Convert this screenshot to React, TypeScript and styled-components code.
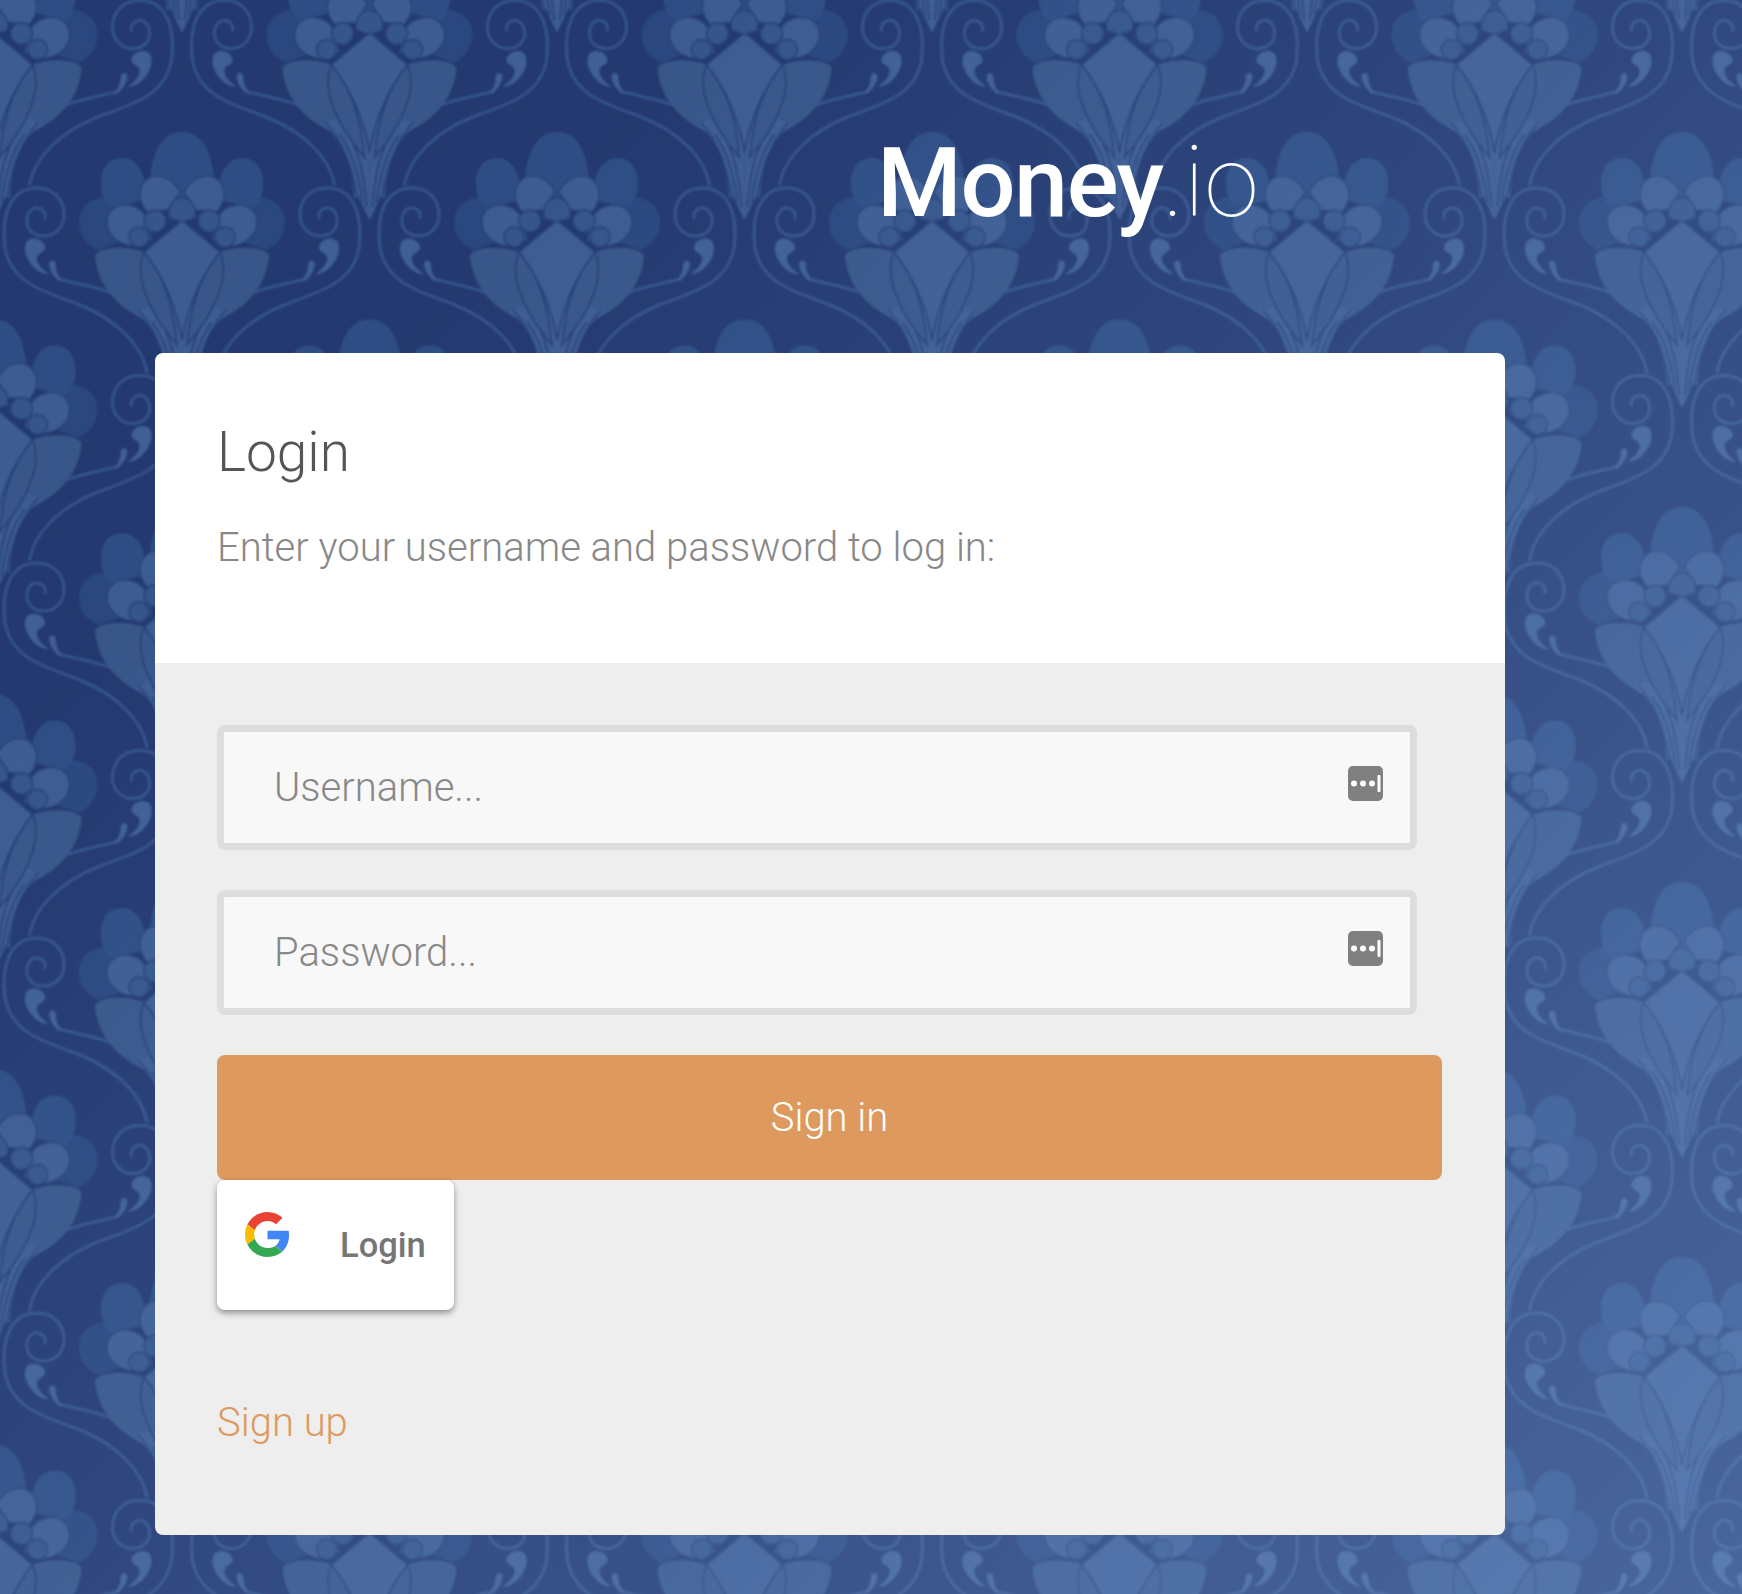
import React from "react";
import styled, { createGlobalStyle } from "styled-components";

const BG = "#23396f";
const LINE = "#274178";
const STRONG = "#3c5c92";
const MEDIUM = "#375689";
const BUD = "#35548b";
const DOME = "#2f4d85";
const FAINT = "#2b477f";
const BAND = "#34538c";
const DROP = "#3f5f95";

const half = (s: number) => `
<g transform="scale(${s} 1)">
  <g fill="none" stroke="${BAND}" stroke-width="3" stroke-linecap="round">
    <path d="M-35 372C-40 345-65 320-102 305C-135 292-170 285-177 248C-181 215-172 188-145 188C-128 188-118 200-118 215C-118 228-128 236-138 236C-150 236-156 228-155 219C-154 210-148 207-144 208C-138 209-136 214-137 218"/>
    <path d="M-14 384C-16 345-30 320-55 301C-75 288-100 285-124 279"/>
  </g>
  <path fill="${DROP}" d="M-154 240C-147 236-138 240-137 247C-136 252-143 252-145 257C-146 263-140 270-133 274C-142 275-152 266-156 255C-158 249-157 243-154 240Z"/>
  <path fill="${DROP}" d="M-133 263C-130 258-126 261-126 266C-126 272-123 277-119 281C-126 281-133 271-133 263Z"/>
  <path fill="${FAINT}" d="M-72 198C-88 195-103 205-103 222C-103 236-95 245-84 250L-55 240Z"/>
  <path fill="${DOME}" d="M-38 200C-34 176-44 158-60 158C-76 158-82 172-81 186C-80 198-76 205-70 208Z"/>
  <g stroke="${LINE}" stroke-width="1.4">
    <path fill="${STRONG}" d="M-46 246C-62 246-75 236-75 222C-75 210-65 204-54 205C-46 206-40 210-36 216L-30 240Z"/>
    <path fill="${STRONG}" d="M-2 192C-8 180-18 175-28 176C-38 178-43 188-42 197C-41 204-38 208-35 212L-14 210Z"/>
    <circle cx="-27" cy="221" r="11" fill="${BUD}"/>
    <circle cx="-43" cy="237" r="10" fill="${BUD}"/>
  </g>
  <path fill="${MEDIUM}" d="M-87 255C-80 246-55 246-38 252C-20 270-8 300-4 330L-32 322C-58 312-85 290-87 255Z"/>
  <path fill="${STRONG}" d="M-48 312C-32 322-18 345-13 380L0 408V300L-20 300Z"/>
  <path fill="${MEDIUM}" stroke="${LINE}" stroke-width="1.8" d="M-38 252C-48 275-35 310-5 345C-8 310-18 275-38 252Z"/>
  <g fill="none" stroke="${LINE}" stroke-width="1.8">
    <path d="M-44 310C-30 325-18 350-13 382"/>
    <path d="M-30 322C-20 335-11 358-7 390"/>
    <path d="M-16 332C-10 345-5 365-3 395"/>
  </g>
</g>`;

const motif = `
<path d="M-33 200C-33 150-20 132 0 132C20 132 33 150 33 200Z" fill="${DOME}"/>
${half(-1)}${half(1)}
<path d="M0 220L-38 252C-20 275-6 305 0 340C6 305 20 275 38 252Z" fill="${STRONG}" stroke="${LINE}" stroke-width="1.8"/>
<path d="M-13 218C-15 205-8 198 0 198C8 198 15 205 13 218L0 222Z" fill="${BUD}" stroke="${LINE}" stroke-width="1.4"/>`;

const spots: [number, number][] = [
  [182, 0], [182, -375], [-5.5, -187.5], [-5.5, 187.5], [369.5, -187.5], [369.5, 187.5],
];

const tile = `<svg xmlns="http://www.w3.org/2000/svg" width="375" height="375" viewBox="0 0 375 375"><defs><filter id="s" x="-5%" y="-5%" width="110%" height="110%"><feGaussianBlur stdDeviation="0.9"/></filter></defs><rect width="375" height="375" fill="${BG}"/><g filter="url(#s)">${spots
  .map(([x, y]) => `<g transform="translate(${x} ${y})">${motif}</g>`)
  .join("")}</g></svg>`;

const wallpaper = `url("data:image/svg+xml,${encodeURIComponent(tile)}")`;

const Global = createGlobalStyle`
  html, body { margin: 0; padding: 0; }
  body { font-family: Roboto, "Liberation Sans", sans-serif; }
`;

const Page = styled.div`
  width: 1742px;
  height: 1594px;
  box-sizing: border-box;
  overflow: hidden;
  padding: 0 237px 0 155px;
  background-image:
    linear-gradient(135deg, rgba(130,170,225,0) 22%, rgba(130,170,225,.13) 50%, rgba(130,170,225,.4) 100%),
    ${wallpaper};
  background-size: 100% 100%, 375px 375px;
`;

const Brand = styled.h1`
  margin: 0;
  height: 353px;
  box-sizing: border-box;
  padding: 127px 0 0 722px;
  font-size: 97px;
  line-height: 110px;
  font-weight: 500;
  color: #fff;
  letter-spacing: -1.4px;
  white-space: nowrap;
`;

const BrandThin = styled.span`
  font-size: 99px;
  font-weight: 100;
  letter-spacing: 0;
`;

const Card = styled.main`
  border-radius: 8px;
  overflow: hidden;
  height: 1182px;
  display: flex;
  flex-direction: column;
`;

const CardHead = styled.header`
  background: #fff;
  height: 310px;
  box-sizing: border-box;
  padding: 67px 62px 0;
`;

const Title = styled.h3`
  margin: 0 0 41px;
  font-size: 55px;
  line-height: 64px;
  font-weight: 300;
  color: #555;
`;

const Lead = styled.p`
  margin: 0;
  font-size: 40px;
  line-height: 46px;
  font-weight: 300;
  color: #888;
`;

const CardBody = styled.section`
  flex: 1;
  background: #eee;
  padding: 62px;
`;

const Form = styled.form`
  display: flex;
  flex-direction: column;
  align-items: flex-start;
`;

const Field = styled.div`
  width: 1200px;
  height: 125px;
  box-sizing: border-box;
  border: 7px solid #ddd;
  border-radius: 8px;
  background: #f8f8f8;
  margin-bottom: 40px;
  display: flex;
  align-items: center;
  justify-content: space-between;
  padding: 0 27px 8px 50px;
`;

const Placeholder = styled.span`
  font-size: 40px;
  font-weight: 300;
  color: #888;
  padding-top: 8px;
`;

const KeyIcon = styled.svg`
  width: 35px;
  height: 35px;
  display: block;
`;

const Submit = styled.button`
  width: 1225px;
  height: 125px;
  border: 0;
  border-radius: 8px;
  background: #de995e;
  color: #fff;
  font: 300 40px Roboto, sans-serif;
  padding: 0;
`;

const GoogleButton = styled.button`
  width: 237px;
  height: 130px;
  box-sizing: border-box;
  border: 0;
  border-radius: 8px;
  background: #fff;
  box-shadow: 0 3px 6px rgba(0, 0, 0, 0.4);
  display: flex;
  align-items: flex-start;
  padding: 32px 0 0 28px;
  color: #757575;
  font: 500 34.5px Roboto, sans-serif;
`;

const GoogleMark = styled.svg`
  width: 45px;
  height: 45px;
  display: block;
  flex: none;
`;

const GoogleLabel = styled.span`
  margin: 14px 0 0 50px;
  line-height: 38px;
`;

const SignUp = styled.a`
  display: block;
  margin-top: 89px;
  font-size: 40px;
  line-height: 47px;
  font-weight: 300;
  color: #de995e;
`;

const PasswordKey = () => (
  <KeyIcon viewBox="0 0 35 35">
    <rect width="35" height="35" rx="5" fill="#808080" />
    <circle cx="6" cy="17.5" r="3" fill="#fff" />
    <circle cx="15" cy="17.5" r="3" fill="#fff" />
    <circle cx="24" cy="17.5" r="3" fill="#fff" />
    <rect x="29.5" y="9" width="3" height="17" rx="1" fill="#fff" />
  </KeyIcon>
);

const GoogleLogo = () => (
  <GoogleMark viewBox="0 0 48 48">
    <path fill="#EA4335" d="M24 9.5c3.54 0 6.71 1.22 9.21 3.6l6.85-6.85C35.9 2.38 30.47 0 24 0 14.62 0 6.51 5.38 2.56 13.22l7.98 6.19C12.43 13.72 17.74 9.5 24 9.5z" />
    <path fill="#4285F4" d="M46.98 24.55c0-1.57-.15-3.09-.38-4.55H24v9.02h12.94c-.58 2.96-2.26 5.48-4.78 7.18l7.73 6c4.51-4.18 7.09-10.36 7.09-17.65z" />
    <path fill="#FBBC05" d="M10.53 28.59c-.48-1.45-.76-2.99-.76-4.59s.27-3.14.76-4.59l-7.98-6.19C.92 16.46 0 20.12 0 24c0 3.88.92 7.54 2.56 10.78l7.97-6.19z" />
    <path fill="#34A853" d="M24 48c6.48 0 11.93-2.13 15.89-5.81l-7.73-6c-2.15 1.45-4.92 2.3-8.16 2.3-6.26 0-11.57-4.22-13.47-9.91l-7.98 6.19C6.51 42.62 14.62 48 24 48z" />
  </GoogleMark>
);

export default function App() {
  return (
    <Page>
      <Global />
      <Brand>
        Money<BrandThin>.io</BrandThin>
      </Brand>
      <Card>
        <CardHead>
          <Title>Login</Title>
          <Lead>Enter your username and password to log in:</Lead>
        </CardHead>
        <CardBody>
          <Form onSubmit={(e) => e.preventDefault()}>
            <Field>
              <Placeholder>Username...</Placeholder>
              <PasswordKey />
            </Field>
            <Field>
              <Placeholder>Password...</Placeholder>
              <PasswordKey />
            </Field>
            <Submit type="submit">Sign in</Submit>
            <GoogleButton type="button">
              <GoogleLogo />
              <GoogleLabel>Login</GoogleLabel>
            </GoogleButton>
          </Form>
          <SignUp>Sign up</SignUp>
        </CardBody>
      </Card>
    </Page>
  );
}
